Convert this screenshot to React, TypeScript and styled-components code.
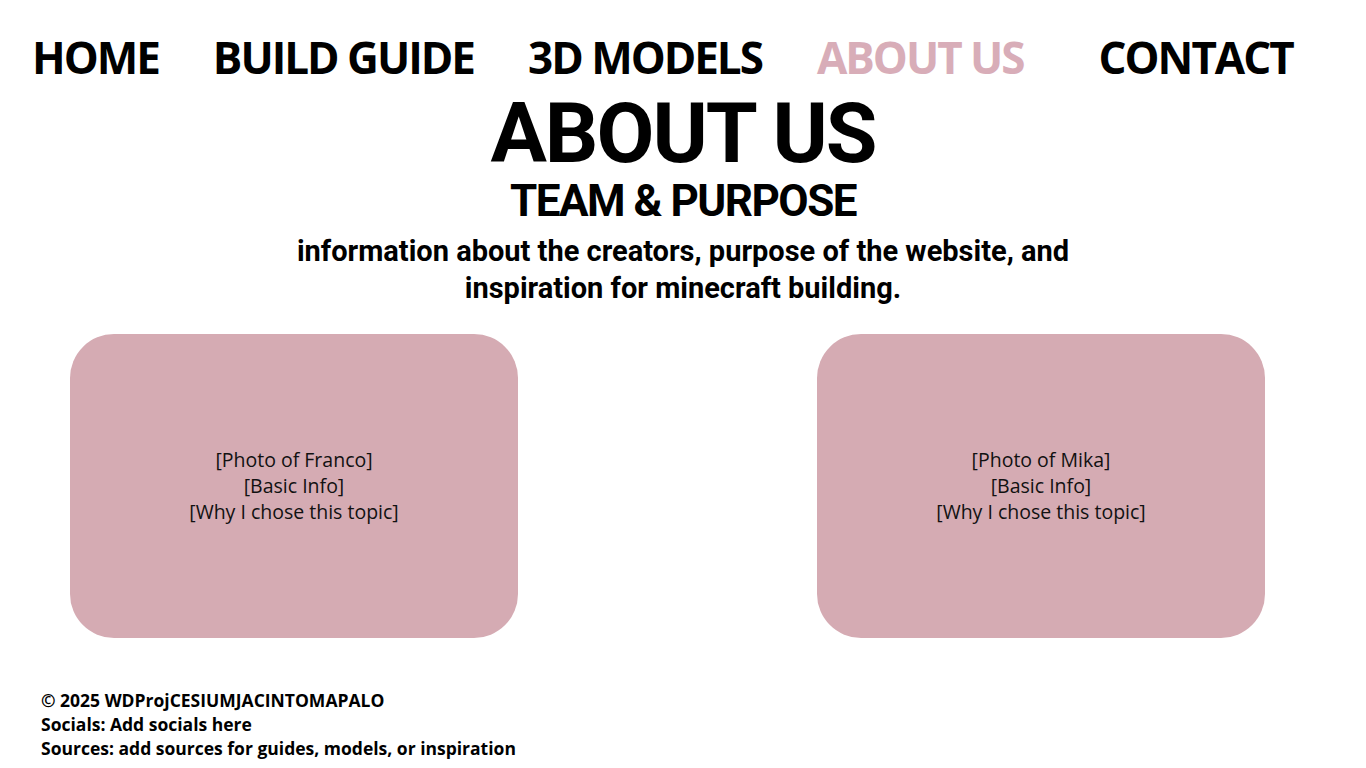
import React from "react";
import styled, { createGlobalStyle } from "styled-components";

const Global = createGlobalStyle`
  html, body { margin: 0; padding: 0; background: #ffffff; }
  body { width: 1366px; height: 768px; overflow: hidden; color: #000; }
`;

const Page = styled.div`
  width: 1366px;
  height: 768px;
  display: flex;
  flex-direction: column;
  box-sizing: border-box;
`;

const Nav = styled.nav`
  display: flex;
  align-items: center;
  padding: 34px 0 0 32px;
  height: 46px;
`;

const NavItem = styled.a<{ $active?: boolean; $gap: number }>`
  font-family: "Open Sans", "Liberation Sans", sans-serif;
  font-weight: 700;
  font-size: 44px;
  line-height: 46px;
  letter-spacing: -2px;
  color: ${(p) => (p.$active ? "#d8adb8" : "#000")};
  text-decoration: none;
  margin-left: ${(p) => p.$gap}px;
  white-space: nowrap;
`;

const Header = styled.header`
  display: flex;
  flex-direction: column;
  align-items: center;
  text-align: center;
`;

const Title = styled.h1`
  margin: 12px 0 0;
  font-family: "Roboto", "Liberation Sans", sans-serif;
  font-weight: 700;
  font-size: 84px;
  line-height: 84px;
  letter-spacing: -2px;
`;

const Subtitle = styled.h2`
  margin: 2px 0 0;
  font-family: "Roboto", "Liberation Sans", sans-serif;
  font-weight: 700;
  font-size: 44px;
  line-height: 46px;
  letter-spacing: -1.5px;
`;

const Lead = styled.p`
  margin: 9px 0 0;
  font-family: "Roboto", "Liberation Sans", sans-serif;
  font-weight: 700;
  font-size: 29px;
  line-height: 37px;
  width: 820px;
`;

const Cards = styled.section`
  display: flex;
  justify-content: space-between;
  padding: 0 101px 0 70px;
  margin-top: 27px;
`;

const Card = styled.div`
  width: 448px;
  height: 304px;
  border-radius: 44px;
  background: #d5abb3;
  display: flex;
  flex-direction: column;
  align-items: center;
  justify-content: center;
  font-family: "Open Sans", "Liberation Sans", sans-serif;
  font-size: 19.5px;
  line-height: 26px;
  color: #111;
`;

const Footer = styled.footer`
  margin-top: 50px;
  padding-left: 41px;
  font-family: "Open Sans", "Liberation Sans", sans-serif;
  font-weight: 700;
  font-size: 17.5px;
  line-height: 24px;
`;

const Line = styled.div``;

export default function App() {
  return (
    <Page>
      <Global />
      <Nav>
        <NavItem $gap={0}>HOME</NavItem>
        <NavItem $gap={54}>BUILD GUIDE</NavItem>
        <NavItem $gap={54}>3D MODELS</NavItem>
        <NavItem $gap={55} $active>ABOUT US</NavItem>
        <NavItem $gap={75}>CONTACT</NavItem>
      </Nav>
      <Header>
        <Title>ABOUT US</Title>
        <Subtitle>TEAM &amp; PURPOSE</Subtitle>
        <Lead>
          information about the creators, purpose of the website, and inspiration for minecraft building.
        </Lead>
      </Header>
      <Cards>
        <Card>
          <Line>[Photo of Franco]</Line>
          <Line>[Basic Info]</Line>
          <Line>[Why I chose this topic]</Line>
        </Card>
        <Card>
          <Line>[Photo of Mika]</Line>
          <Line>[Basic Info]</Line>
          <Line>[Why I chose this topic]</Line>
        </Card>
      </Cards>
      <Footer>
        <Line>© 2025 WDProjCESIUMJACINTOMAPALO</Line>
        <Line>Socials: Add socials here</Line>
        <Line>Sources: add sources for guides, models, or inspiration</Line>
      </Footer>
    </Page>
  );
}
